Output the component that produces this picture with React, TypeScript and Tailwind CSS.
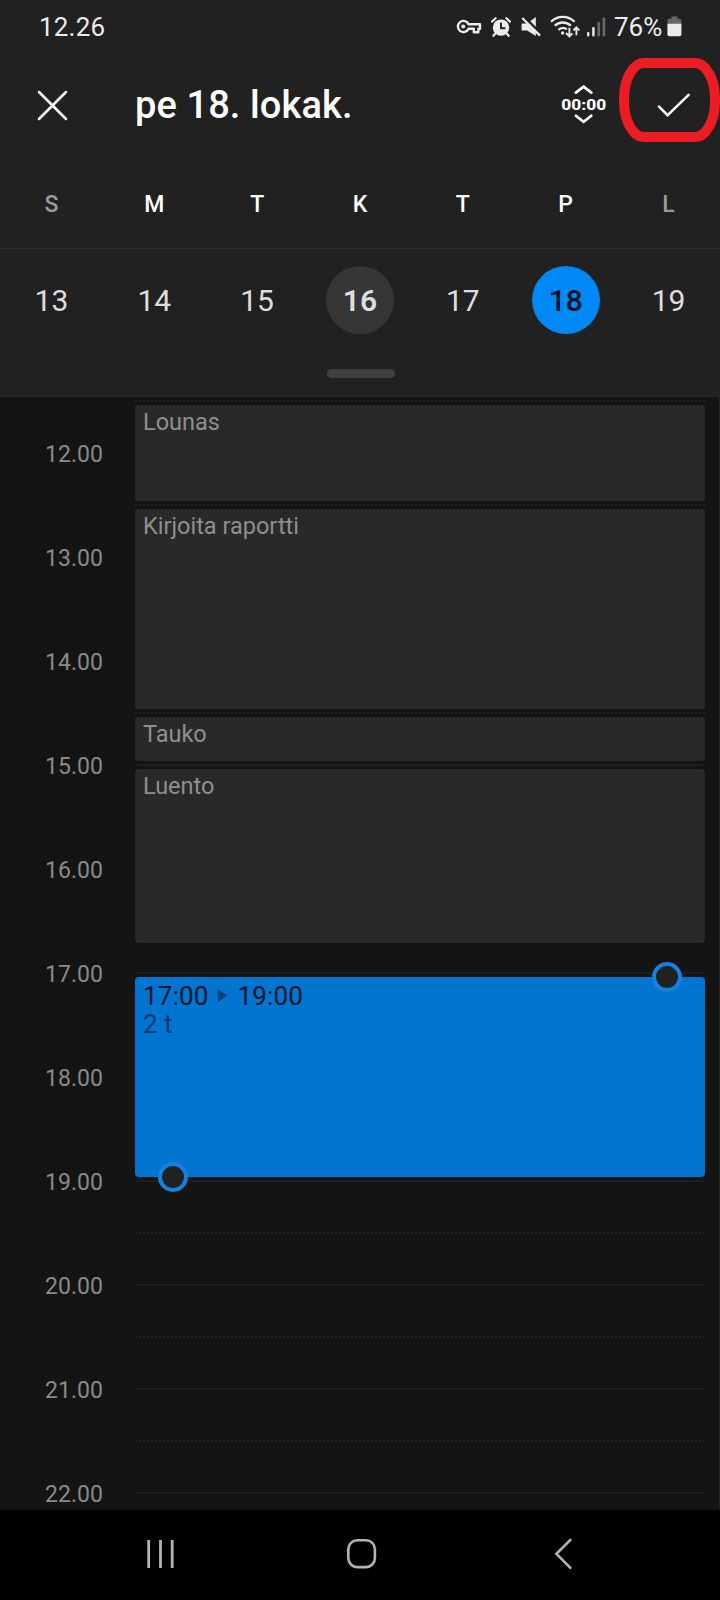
import type { ReactNode } from "react";
import clsx from "clsx";

const days = [
  { letter: "S", date: 13, weekend: true },
  { letter: "M", date: 14 },
  { letter: "T", date: 15 },
  { letter: "K", date: 16, today: true },
  { letter: "T", date: 17 },
  { letter: "P", date: 18, selected: true },
  { letter: "L", date: 19, weekend: true },
];

const hours = [12, 13, 14, 15, 16, 17, 18, 19, 20, 21, 22];

function StatusBar() {
  return (
    <div className="flex h-[54px] items-center justify-between pl-[39px] pr-[38px] text-[26px] leading-none text-[#ececec]">
      <span className="tracking-[0.2px]">12.26</span>
      <div className="flex items-center">
        <svg width="26" height="16" viewBox="0 0 26 16" fill="none" stroke="currentColor" className="mr-2 -translate-x-px">
          <path
            d="M12.6 5.2H24v4.6h-1.6v3.4h-4.6V9.8h-5.2a5.6 5.6 0 1 1 0-4.6z"
            strokeWidth="2.4"
            strokeLinejoin="round"
          />
          <circle cx="7.2" cy="7.5" r="2" fill="currentColor" stroke="none" />
        </svg>
        <svg width="20" height="20" viewBox="0 0 20 20" fill="none" stroke="currentColor" className="mr-[10px]">
          <circle cx="10" cy="10.6" r="8.2" fill="currentColor" stroke="none" />
          <path d="M1 4.6 4.6 1.2M19 4.6 15.4 1.2" strokeWidth="2.2" strokeLinecap="round" />
          <path d="M4.4 16.4 2.4 18.8M15.6 16.4l2 2.4" strokeWidth="2.2" strokeLinecap="round" />
          <path d="M10 5.6v5.6h4.4" stroke="#212121" strokeWidth="1.9" />
        </svg>
        <svg width="20" height="20" viewBox="0 0 20 20" className="mr-[10px]">
          <path d="M0.6 6.4h5.6L14.8 0v19L6.2 13.6H0.6z" fill="currentColor" />
          <path d="M2.6-.4 21 18" stroke="#212121" strokeWidth="3" />
          <path d="M1.2 1 19 18.6" stroke="currentColor" strokeWidth="2.2" />
        </svg>
        <svg width="30" height="23" viewBox="0 0 30 23" fill="none" stroke="currentColor" className="mr-[6px] -translate-x-px -translate-y-px">
          <path d="M1 6.8a16.8 16.8 0 0 1 23.6 0" strokeWidth="2.3" />
          <path d="M4.8 10.8a11.4 11.4 0 0 1 16 0" strokeWidth="2.3" />
          <path d="M8.4 14.8a6.4 6.4 0 0 1 8.4-.4" strokeWidth="2.3" />
          <circle cx="12.6" cy="18" r="1.7" fill="currentColor" stroke="none" />
          <path d="M19.4 12.8v8.2M16 18l3.4 3.4 3-3M26.4 20.2v-7.6M23.4 15.4l3-3 3 3" strokeWidth="1.9" />
        </svg>
        <svg width="19" height="20" viewBox="0 0 19 20" fill="currentColor" className="mr-[8px]">
          <rect y="15" width="2.4" height="4.6" rx="1" />
          <rect x="5.2" y="10" width="2.4" height="9.6" rx="1" />
          <rect x="10.4" y="5" width="2.6" height="14.6" rx="1" fill="#686868" />
          <rect x="15.6" y="0.4" width="2.6" height="19.2" rx="1" fill="#686868" />
        </svg>
        <span className="w-[53px]">76%</span>
        <svg width="15" height="21" viewBox="0 0 15 21" className="-translate-y-px">
          <path d="M0.4 8V4.4q0-1.6 1.6-1.6h2.4V.4h6v2.4h2.4q1.6 0 1.6 1.6V8z" fill="#686868" />
          <path d="M0.4 7.8h14v10.4q0 2-2 2h-10q-2 0-2-2z" fill="currentColor" />
        </svg>
      </div>
    </div>
  );
}

function Toolbar() {
  return (
    <div className="relative flex h-[102px] items-center pl-[37px] text-white">
      <svg width="31" height="31" viewBox="0 0 31 31" stroke="currentColor" strokeWidth="2.5" strokeLinecap="round">
        <path d="M2 2l27 27M29 2 2 29" />
      </svg>
      <h1 className="ml-[67px] w-[425px] text-[38px] font-medium leading-none tracking-[0.1px]">pe 18. lokak.</h1>
      <svg width="48" height="40" viewBox="0 0 48 40" fill="none" stroke="currentColor" strokeWidth="2.7" strokeLinecap="round">
        <path d="M15.9 7.6 23.6 1.6l7.7 6M15.9 30.8l7.7 6 7.7-6" />
        <text
          x="1.2"
          y="24.8"
          textLength="45"
          lengthAdjust="spacingAndGlyphs"
          fill="currentColor"
          stroke="none"
          className="font-['Roboto'] text-[15.5px] font-extrabold"
        >
          00:00
        </text>
      </svg>
      <svg width="36" height="26" viewBox="0 0 36 26" fill="none" stroke="currentColor" strokeWidth="2.5" strokeLinecap="round" className="ml-[48px] translate-y-px">
        <path d="M3 13.6 11.6 22.2 32.6 1.8" />
      </svg>
      {/* marker highlight round the confirm button */}
      <svg width="102" height="86" viewBox="0 0 102 86" fill="none" className="absolute right-0 top-[3px]">
        <rect x="6" y="6" width="91" height="74" rx="20" ry="36" stroke="#ec1c24" strokeWidth="10" />
      </svg>
    </div>
  );
}

function WeekStrip() {
  return (
    <div>
      <div className="grid h-[93px] grid-cols-7 items-center border-b border-[#2b2b2b] pt-[6px] text-center text-[23px] font-medium">
        {days.map((day) => (
          <span key={day.date} className={day.weekend ? "text-[#9a9a9a]" : "text-white"}>
            {day.letter}
          </span>
        ))}
      </div>
      <div className="grid grid-cols-7 justify-items-center pt-[17px] text-[30px] text-[#dedede]">
        {days.map((day) => (
          <span
            key={day.date}
            className={clsx(
              "flex size-[68px] items-center justify-center rounded-full",
              day.today && "bg-[#363636] font-semibold",
              day.selected && "bg-[#0088f4] font-medium text-[#06121f]"
            )}
          >
            {day.date}
          </span>
        ))}
      </div>
      <div className="mx-auto mt-[35px] h-[9px] w-[68px] translate-x-px rounded-full bg-[#404040]" />
    </div>
  );
}

function Event({ className, children }: { className: string; children: ReactNode }) {
  return (
    <div className={clsx("shrink-0 rounded bg-[#292929] pl-2 text-[23.5px] leading-[34px] text-[#8f8f8f]", className)}>
      {children}
    </div>
  );
}

function Knob({ className }: { className: string }) {
  return <span className={clsx("absolute size-[30px] rounded-full border-4 border-[#1482e0] bg-[#212121]", className)} />;
}

function Timeline() {
  return (
    <div className="flex h-[1113px] overflow-hidden border-r border-[#242424] bg-[#141414]">
      <div className="w-[135px] shrink-0 pr-[32px] pt-[6px] text-right text-[23px] tracking-[0.05px] text-[#8a8a8a]">
        {hours.map((hour) => (
          <div key={hour} className="h-[104px] leading-[104px]">
            {hour}.00
          </div>
        ))}
      </div>
      <div className="grid w-[570px] grid-cols-1">
        <div className="col-start-1 row-start-1 pt-[3px]">
          {hours.map((hour) => (
            <div key={hour}>
              <div className="mb-[50px] h-0.5 bg-[repeating-linear-gradient(90deg,#202020_0_2px,transparent_2px_4px)]" />
              <div className="mb-[50px] h-0.5 bg-[#1e1e1e]" />
            </div>
          ))}
        </div>
        <div className="col-start-1 row-start-1 flex flex-col pt-2">
          <Event className="h-24">Lounas</Event>
          <Event className="mt-2 h-[200px]">Kirjoita raportti</Event>
          <Event className="mt-2 h-11">Tauko</Event>
          <Event className="mt-2 h-[174px]">Luento</Event>
          <div className="relative mt-[34px] h-[200px] shrink-0 rounded bg-[#0275d0] pl-2 pt-[5px] text-[26px] leading-[28px] text-[#06142b]">
            <div className="flex items-center tracking-[0.15px]">
              <span>17:00</span>
              <svg width="11" height="15" viewBox="0 0 11 15" className="ml-2 mr-[10px] -translate-y-px">
                <path d="M0.6 0.4 10.4 7.5 0.6 14.6z" fill="#07427c" />
              </svg>
              <span>19:00</span>
            </div>
            <div className="text-[#07396b]">2 t</div>
            <Knob className="-top-[15px] right-[23px]" />
            <Knob className="-bottom-[15px] left-[23px]" />
          </div>
        </div>
      </div>
    </div>
  );
}

function NavBar() {
  return (
    <div className="flex h-[90px] items-center bg-black pb-[3px] pl-[145px] text-[#b4b4b4]">
      <svg width="31" height="30" viewBox="0 0 31 30" stroke="currentColor" strokeWidth="2.8" className="mr-[169px]">
        <path d="M3.7 1v28M15.5 1v28M27.2 1v28" />
      </svg>
      <svg width="32" height="32" viewBox="0 0 32 32" fill="none" stroke="currentColor" strokeWidth="2.6" className="mr-[176px]">
        <rect x="3.3" y="2.3" width="26.6" height="26.8" rx="9" />
      </svg>
      <svg width="20" height="32" viewBox="0 0 20 32" fill="none" stroke="currentColor" strokeWidth="2.6" strokeLinecap="round">
        <path d="M17.4 1.8 3.4 15.8l14 14" />
      </svg>
    </div>
  );
}

export default function App() {
  return (
    <main className="h-[1600px] w-[720px] overflow-hidden bg-[#141414] font-['Roboto',sans-serif]">
      <header className="h-[397px] border-b border-[#262626] bg-[#212121]">
        <StatusBar />
        <Toolbar />
        <WeekStrip />
      </header>
      <Timeline />
      <NavBar />
    </main>
  );
}
